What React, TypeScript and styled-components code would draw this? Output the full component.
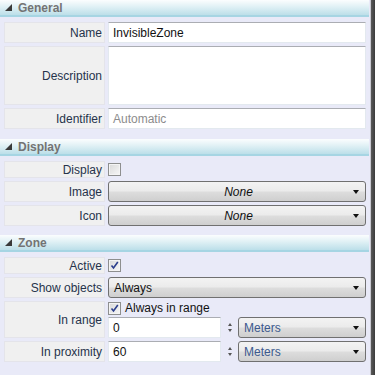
import styled, { createGlobalStyle } from 'styled-components';

const Global = createGlobalStyle`
  html, body { margin: 0; padding: 0; }
  body {
    width: 375px;
    height: 375px;
    overflow: hidden;
    font-family: "Liberation Sans", Arial, sans-serif;
    font-size: 12px;
  }
`;

const Frame = styled.div`
  display: flex;
  width: 375px;
  height: 375px;
  background: #e9eaf8;
`;

const Panel = styled.div`
  flex: 1;
  display: flex;
  flex-direction: column;
  padding-right: 1px;
`;

const ScrollEdge = styled.div`
  width: 4px;
  border-left: 1px solid #c8c8d0;
  background: linear-gradient(90deg, #5a5a5a, #3c3c3c);
`;

const Header = styled.div`
  height: 15px;
  display: flex;
  align-items: center;
  gap: 6px;
  padding-left: 5px;
  background: linear-gradient(180deg, #fbfdfe 0%, #e3f2f6 40%, #bcdfe9 100%);
  border-bottom: 2px solid #a6d5e3;
  color: #737373;
  font-weight: bold;
  font-size: 12px;
`;

const Section = styled.div<{ $bottom?: number }>`
  display: flex;
  flex-direction: column;
  gap: 3px;
  padding: 5px 3px ${p => p.$bottom ?? 9}px 4px;
`;

const Row = styled.div<{ $h: number }>`
  display: grid;
  grid-template-columns: 101px 1fr;
  column-gap: 3px;
  height: ${p => p.$h}px;
`;

const Label = styled.div`
  background: #f0f0f0;
  border: 1px solid #e4e4ea;
  box-sizing: border-box;
  display: flex;
  align-items: center;
  justify-content: flex-end;
  padding-right: 2px;
  color: #26334b;
  white-space: nowrap;
`;

const TextBox = styled.div<{ $muted?: boolean; $top?: boolean }>`
  background: #fff;
  box-sizing: border-box;
  border: 1px solid #e3e9ef;
  border-top-color: #abadb3;
  display: flex;
  align-items: ${p => (p.$top ? 'flex-start' : 'center')};
  padding-left: 4px;
  color: ${p => (p.$muted ? '#8c8c8c' : '#111')};
  height: 100%;
  min-width: 0;
`;

const Combo = styled.div<{ $blue?: boolean }>`
  box-sizing: border-box;
  height: 100%;
  border: 1px solid #707070;
  border-radius: 3px;
  background: linear-gradient(180deg, #f3f3f3 0%, #ebebeb 48%, #dddddd 52%, #cfcfcf 100%);
  display: flex;
  align-items: center;
  padding: 0 6px 0 5px;
  color: ${p => (p.$blue ? '#3c5a8e' : '#111')};
  min-width: 0;
`;

const ComboText = styled.span<{ $center?: boolean }>`
  flex: 1;
  text-align: ${p => (p.$center ? 'center' : 'left')};
  font-style: ${p => (p.$center ? 'italic' : 'normal')};
  padding-left: ${p => (p.$center ? '10px' : '0')};
`;

const Arrow = styled.span`
  width: 0;
  height: 0;
  border-left: 3.5px solid transparent;
  border-right: 3.5px solid transparent;
  border-top: 4px solid #111;
`;

const CheckCell = styled.div`
  display: flex;
  align-items: center;
  gap: 4px;
  color: #111;
`;

const Box = styled.div`
  width: 13px;
  height: 13px;
  box-sizing: border-box;
  border: 1px solid #8e8f8f;
  background: linear-gradient(135deg, #d9d9d9, #f7f7f7);
  box-shadow: inset 0 0 0 1px #f4f4f4;
  display: flex;
  align-items: center;
  justify-content: center;
`;

const Stack = styled.div`
  display: flex;
  flex-direction: column;
  gap: 2px;
`;

const UnitRow = styled.div`
  display: grid;
  grid-template-columns: 113px 17px 1fr;
  height: 21px;
`;

const Spinner = styled.div`
  display: flex;
  flex-direction: column;
  align-items: center;
  justify-content: center;
  gap: 3px;
`;

const Tri = styled.span<{ $up?: boolean }>`
  width: 0;
  height: 0;
  border-left: 2px solid transparent;
  border-right: 2px solid transparent;
  ${p => (p.$up ? 'border-bottom: 3px solid #555;' : 'border-top: 3px solid #555;')}
`;

function Triangle() {
  return (
    <svg width="7" height="7" viewBox="0 0 7 7">
      <polygon points="7,0 7,7 0,7" fill="#3a3a3a" />
    </svg>
  );
}

function Check({ checked }: { checked?: boolean }) {
  return (
    <Box>
      {checked && (
        <svg width="9" height="9" viewBox="0 0 9 9">
          <path d="M1.5 4.5 L3.5 7 L7.8 1" stroke="#2c3e8c" strokeWidth="1.6" fill="none" />
        </svg>
      )}
    </Box>
  );
}

function Drop({ text, center, blue }: { text: string; center?: boolean; blue?: boolean }) {
  return (
    <Combo $blue={blue}>
      <ComboText $center={center}>{text}</ComboText>
      <Arrow />
    </Combo>
  );
}

function UnitField({ value }: { value: string }) {
  return (
    <UnitRow>
      <TextBox>{value}</TextBox>
      <Spinner>
        <Tri $up />
        <Tri />
      </Spinner>
      <Drop text="Meters" blue />
    </UnitRow>
  );
}

export default function App() {
  return (
    <>
      <Global />
      <Frame>
        <Panel>
          <Header>
            <Triangle />
            General
          </Header>
          <Section $bottom={10}>
            <Row $h={21}>
              <Label>Name</Label>
              <TextBox>InvisibleZone</TextBox>
            </Row>
            <Row $h={59}>
              <Label>Description</Label>
              <TextBox $top />
            </Row>
            <Row $h={21}>
              <Label>Identifier</Label>
              <TextBox $muted>Automatic</TextBox>
            </Row>
          </Section>

          <Header>
            <Triangle />
            Display
          </Header>
          <Section $bottom={9}>
            <Row $h={17}>
              <Label>Display</Label>
              <CheckCell>
                <Check />
              </CheckCell>
            </Row>
            <Row $h={21}>
              <Label>Image</Label>
              <Drop text="None" center />
            </Row>
            <Row $h={21}>
              <Label>Icon</Label>
              <Drop text="None" center />
            </Row>
          </Section>

          <Header>
            <Triangle />
            Zone
          </Header>
          <Section>
            <Row $h={17}>
              <Label>Active</Label>
              <CheckCell>
                <Check checked />
              </CheckCell>
            </Row>
            <Row $h={21}>
              <Label>Show objects</Label>
              <Drop text="Always" />
            </Row>
            <Row $h={37}>
              <Label>In range</Label>
              <Stack>
                <CheckCell>
                  <Check checked />
                  Always in range
                </CheckCell>
                <UnitField value="0" />
              </Stack>
            </Row>
            <Row $h={21}>
              <Label>In proximity</Label>
              <UnitField value="60" />
            </Row>
          </Section>
        </Panel>
        <ScrollEdge />
      </Frame>
    </>
  );
}
